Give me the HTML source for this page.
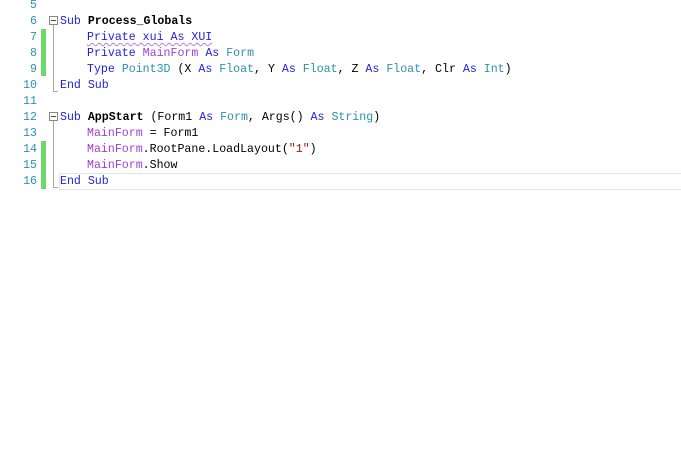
<!DOCTYPE html>
<html><head><meta charset="utf-8"><style>
body{margin:0;width:681px;height:463px;background:#fff;overflow:hidden;position:relative;font-family:"Liberation Mono",monospace;font-size:11.6px}
.ln{position:absolute;left:0;width:37px;text-align:right;color:#2b91af;height:16px;line-height:16px;margin-top:2px}
.c{position:absolute;height:16px;line-height:16px;white-space:pre;color:#000;margin-top:2px}
.k{color:#1f1fe0}.t{color:#2b91af}.v{color:#a040d0}.s{color:#a31515}
.g{position:absolute;left:41px;width:5px;background:#6bd96b}
.box{position:absolute;left:49px;width:7px;height:7px;border:1px solid #888;background:#fff}
.box:after{content:"";position:absolute;left:1px;top:3px;width:5px;height:1px;background:#444}
.vl{position:absolute;left:53px;width:1px;background:#aaa}
.sq{text-decoration:underline wavy #c080d0;text-decoration-thickness:1px;text-underline-offset:2px}
</style></head><body>
<div class="ln" style="top:-4px">5</div>
<div class="ln" style="top:12px">6</div>
<div class="ln" style="top:28px">7</div>
<div class="ln" style="top:44px">8</div>
<div class="ln" style="top:60px">9</div>
<div class="ln" style="top:76px">10</div>
<div class="ln" style="top:92px">11</div>
<div class="ln" style="top:108px">12</div>
<div class="ln" style="top:124px">13</div>
<div class="ln" style="top:140px">14</div>
<div class="ln" style="top:156px">15</div>
<div class="ln" style="top:172px">16</div>
<div class="g" style="top:29px;height:47px"></div>
<div class="g" style="top:141px;height:48px"></div>
<div style="position:absolute;left:59px;top:173px;width:640px;height:15px;border:1px solid #e4e4e4;border-right:none"></div>
<div class="vl" style="top:25px;height:67px"></div>
<div style="position:absolute;left:53px;top:91px;width:5px;height:1px;background:#aaa"></div>
<div class="vl" style="top:121px;height:67px"></div>
<div style="position:absolute;left:53px;top:187px;width:5px;height:1px;background:#aaa"></div>
<div class="box" style="top:16px"></div>
<div class="box" style="top:112px"></div>
<div class="c" style="left:60px;top:12px"><span class="k">Sub</span> <b>Process_Globals</b></div>
<div class="c" style="left:87px;top:28px"><span class="k sq">Private xui As XUI</span></div>
<div class="c" style="left:87px;top:44px"><span class="k">Private</span> <span class="v">MainForm</span> <span class="k">As</span> <span class="t">Form</span></div>
<div class="c" style="left:87px;top:60px"><span class="k">Type</span> <span class="t">Point3D</span> (X <span class="k">As</span> <span class="t">Float</span>, Y <span class="k">As</span> <span class="t">Float</span>, Z <span class="k">As</span> <span class="t">Float</span>, Clr <span class="k">As</span> <span class="t">Int</span>)</div>
<div class="c" style="left:60px;top:76px"><span class="k">End Sub</span></div>
<div class="c" style="left:60px;top:108px"><span class="k">Sub</span> <b>AppStart</b> (Form1 <span class="k">As</span> <span class="t">Form</span>, Args() <span class="k">As</span> <span class="t">String</span>)</div>
<div class="c" style="left:87px;top:124px"><span class="v">MainForm</span> = Form1</div>
<div class="c" style="left:87px;top:140px"><span class="v">MainForm</span>.RootPane.LoadLayout(<span class="s">"1"</span>)</div>
<div class="c" style="left:87px;top:156px"><span class="v">MainForm</span>.Show</div>
<div class="c" style="left:60px;top:172px"><span class="k">End Sub</span></div>
</body></html>
